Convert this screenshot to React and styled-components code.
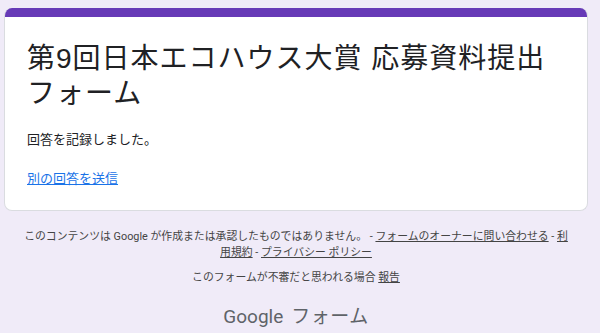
import styled, { createGlobalStyle } from "styled-components";

const GlobalStyle = createGlobalStyle`
  body {
    margin: 0;
    background: #f0ebf8;
    font-family: Roboto, "Noto Sans CJK JP", sans-serif;
  }
`;

const Page = styled.div`
  min-height: 333px;
  box-sizing: border-box;
  padding: 8px 12px 0 4px;
  background: #f0ebf8;
`;

const Card = styled.div`
  background: #fff;
  border: 1px solid #dadce0;
  border-top: none;
  border-radius: 8px;
  overflow: hidden;
`;

const TopBar = styled.div`
  height: 9px;
  background: #673ab7;
`;

const CardBody = styled.div`
  padding: 24px 22px 22px 22px;
`;

const Title = styled.h1`
  margin: 0;
  max-width: 540px;
  font-family: "Liberation Sans", "Noto Sans CJK JP", sans-serif;
  font-size: 28px;
  font-weight: 400;
  line-height: 35px;
  letter-spacing: 1px;
  color: #202124;
`;

const Message = styled.div`
  margin-top: 20px;
  font-family: "Liberation Sans", "Noto Sans CJK JP", sans-serif;
  font-size: 13px;
  line-height: 18px;
  color: #202124;
`;

const AnotherLink = styled.a`
  display: inline-block;
  margin-top: 21px;
  font-family: "Liberation Sans", "Noto Sans CJK JP", sans-serif;
  font-size: 13px;
  line-height: 18px;
  color: #1a73e8;
  text-decoration: underline;
  cursor: pointer;
`;

const Footer = styled.div`
  width: 552px;
  margin: 18px auto 0;
  text-align: center;
  font-size: 10.85px;
  line-height: 16px;
  color: #444;
`;

const FooterLine = styled.div`
  margin-top: ${(p) => p.$gap || 0}px;
`;

const FooterLink = styled.a`
  color: #444;
  text-decoration: underline;
  cursor: pointer;
`;

const Brand = styled.div`
  display: flex;
  justify-content: center;
  align-items: baseline;
  gap: 8px;
  margin-top: 17px;
  color: #5f6368;
  font-size: 19px;
  line-height: 24px;
`;

const BrandWord = styled.span`
  font-family: ${(p) => (p.$latin ? "Roboto" : '"Noto Sans CJK JP"')}, sans-serif;
  font-weight: 400;
  letter-spacing: ${(p) => (p.$latin ? "0px" : "0.5px")};
`;

export default function App() {
  return (
    <>
      <GlobalStyle />
      <Page>
        <Card>
          <TopBar />
          <CardBody>
            <Title>第9回日本エコハウス大賞 応募資料提出フォーム</Title>
            <Message>回答を記録しました。</Message>
            <AnotherLink>別の回答を送信</AnotherLink>
          </CardBody>
        </Card>
        <Footer>
          <FooterLine>
            このコンテンツは Google が作成または承認したものではありません。 -{" "}
            <FooterLink>フォームのオーナーに問い合わせる</FooterLink> -{" "}
            <FooterLink>利用規約</FooterLink> -{" "}
            <FooterLink>プライバシー ポリシー</FooterLink>
          </FooterLine>
          <FooterLine $gap={9}>
            このフォームが不審だと思われる場合 <FooterLink>報告</FooterLink>
          </FooterLine>
        </Footer>
        <Brand>
          <BrandWord $latin>Google</BrandWord>
          <BrandWord>フォーム</BrandWord>
        </Brand>
      </Page>
    </>
  );
}
